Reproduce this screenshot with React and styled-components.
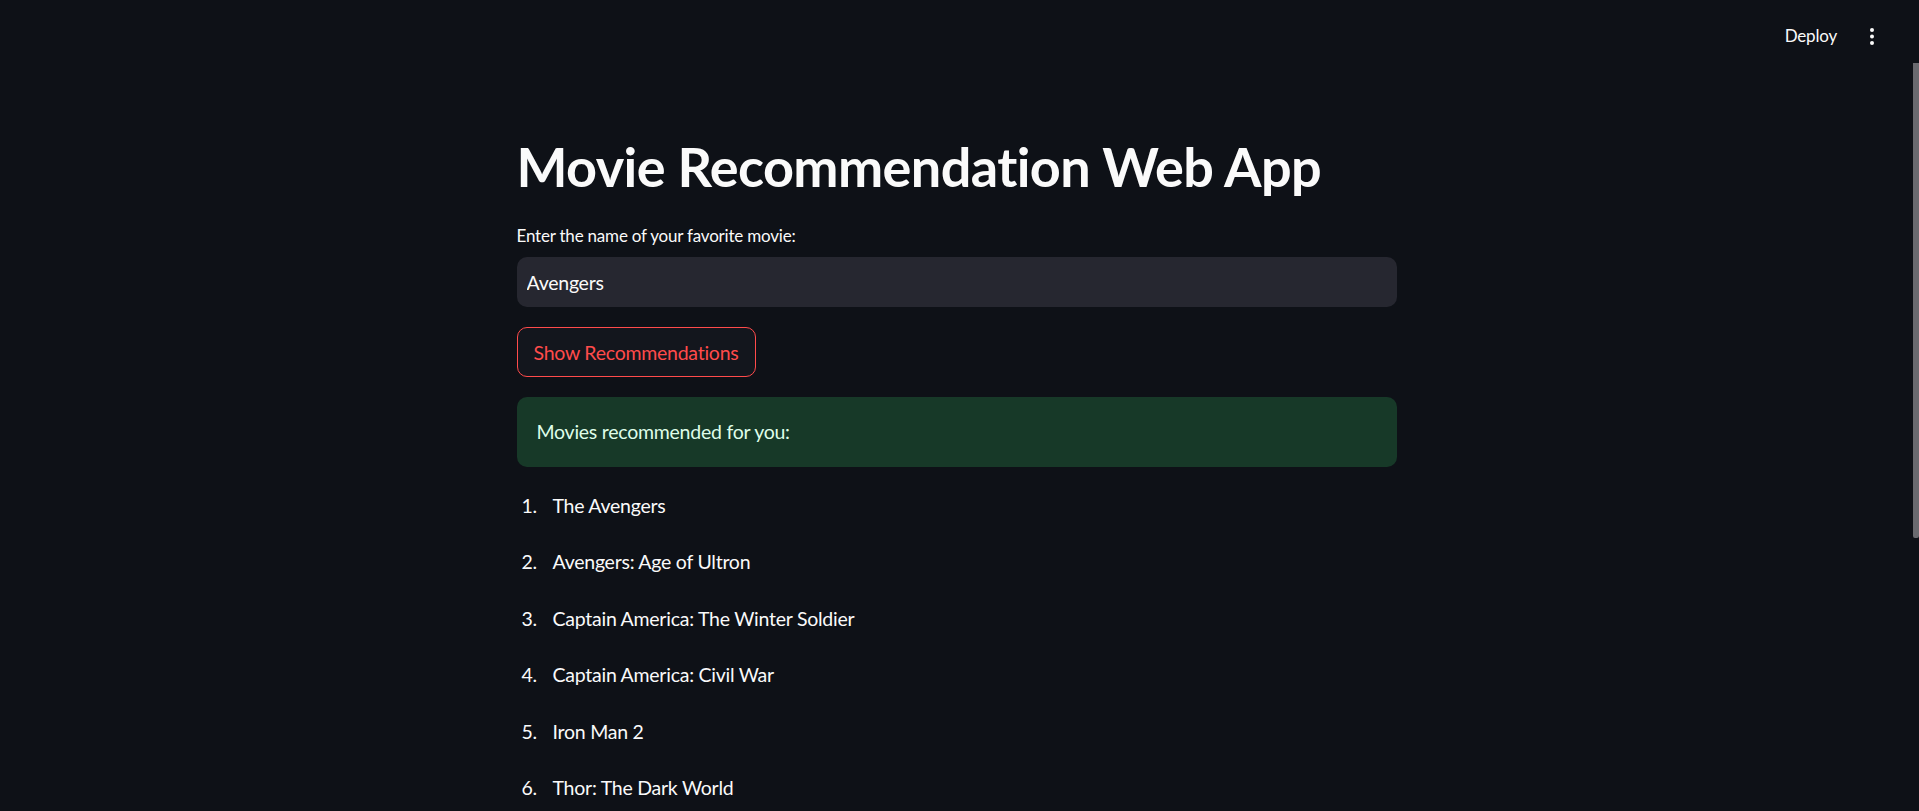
import styled, { createGlobalStyle } from "styled-components";

const GlobalStyle = createGlobalStyle`
  html, body {
    margin: 0;
    padding: 0;
    background: #0e1117;
    overflow: hidden;
  }
  * {
    box-sizing: border-box;
  }
`;

const Page = styled.div`
  display: flex;
  flex-direction: column;
  height: 100vh;
  background: #0e1117;
  color: #fafafa;
  font-family: Lato, "Noto Sans", sans-serif;
`;

const Header = styled.header`
  display: flex;
  justify-content: flex-end;
  align-items: center;
  gap: 31px;
  height: 60px;
  padding: 13px 43px 0 0;
  flex-shrink: 0;
`;

const DeployButton = styled.button`
  background: transparent;
  border: none;
  padding: 0;
  color: #fafafa;
  font-family: inherit;
  font-size: 17px;
  letter-spacing: -0.2px;
  line-height: 1.2;
  cursor: pointer;
`;

const MenuButton = styled.button`
  display: flex;
  align-items: center;
  justify-content: center;
  width: 8px;
  height: 24px;
  padding: 0;
  background: transparent;
  border: none;
  cursor: pointer;
`;

const Body = styled.div`
  display: flex;
  flex: 1;
  min-height: 0;
`;

const Main = styled.main`
  flex: 1;
  overflow: hidden;
`;

const Rail = styled.div`
  width: 6px;
  flex-shrink: 0;
`;

const Thumb = styled.div`
  margin-top: 3px;
  height: 475px;
  background: #6a6a6f;
  border-radius: 0 0 2px 2px;
`;

const Column = styled.div`
  max-width: 880px;
  margin: 0 auto;
  padding: 74px 0 200px;
  display: flex;
  flex-direction: column;
`;

const Title = styled.h1`
  margin: 0 0 22px;
  font-size: 54px;
  font-weight: 700;
  line-height: 66px;
  letter-spacing: -0.6px;
`;

const Label = styled.label`
  display: block;
  margin-bottom: 7px;
  font-size: 17px;
  letter-spacing: -0.2px;
  line-height: 28px;
`;

const TextInput = styled.input`
  width: 100%;
  height: 50px;
  padding: 0 10px;
  margin-bottom: 20px;
  background: #262730;
  border: none;
  border-radius: 10px;
  outline: none;
  color: #fafafa;
  font-family: inherit;
  font-size: 19.5px;
  letter-spacing: -0.25px;
`;

const Button = styled.button`
  align-self: flex-start;
  height: 50px;
  padding: 0 17px 0 16px;
  margin-bottom: 20px;
  background: #13161d;
  border: 1px solid #ff4b4b;
  border-radius: 10px;
  color: #ff4b4b;
  font-family: inherit;
  font-size: 19.5px;
  letter-spacing: -0.25px;
  cursor: pointer;
`;

const SuccessBox = styled.div`
  padding: 20px;
  margin-bottom: 23px;
  background: #173928;
  border-radius: 10px;
  color: #dffde9;
  font-size: 19.5px;
  letter-spacing: -0.25px;
  line-height: 30px;
`;

const List = styled.ol`
  margin: 0;
  padding: 0 0 0 5px;
  list-style: none;
  display: flex;
  flex-direction: column;
  gap: 24.4px;
`;

const Item = styled.li`
  display: flex;
  font-size: 19.5px;
  letter-spacing: -0.25px;
  line-height: 32px;
`;

const Num = styled.span`
  width: 31px;
  flex-shrink: 0;
`;

const movies = [
  "The Avengers",
  "Avengers: Age of Ultron",
  "Captain America: The Winter Soldier",
  "Captain America: Civil War",
  "Iron Man 2",
  "Thor: The Dark World",
  "Iron Man 3",
  "Iron Man",
  "Captain America: The First Avenger",
  "Ant-Man",
];

const KebabIcon = () => (
  <svg width="4" height="18" viewBox="0 0 4 18" fill="#fafafa">
    <circle cx="2" cy="2" r="2" />
    <circle cx="2" cy="8.5" r="2" />
    <circle cx="2" cy="15" r="2" />
  </svg>
);

export default function App() {
  return (
    <>
      <GlobalStyle />
      <Page>
        <Header>
          <DeployButton>Deploy</DeployButton>
          <MenuButton>
            <KebabIcon />
          </MenuButton>
        </Header>
        <Body>
          <Main>
            <Column>
              <Title>Movie Recommendation Web App</Title>
              <Label htmlFor="movie">Enter the name of your favorite movie:</Label>
              <TextInput id="movie" defaultValue="Avengers" />
              <Button>Show Recommendations</Button>
              <SuccessBox>Movies recommended for you:</SuccessBox>
              <List>
                {movies.map((m, i) => (
                  <Item key={m}>
                    <Num>{i + 1}.</Num>
                    {m}
                  </Item>
                ))}
              </List>
            </Column>
          </Main>
          <Rail>
            <Thumb />
          </Rail>
        </Body>
      </Page>
    </>
  );
}
